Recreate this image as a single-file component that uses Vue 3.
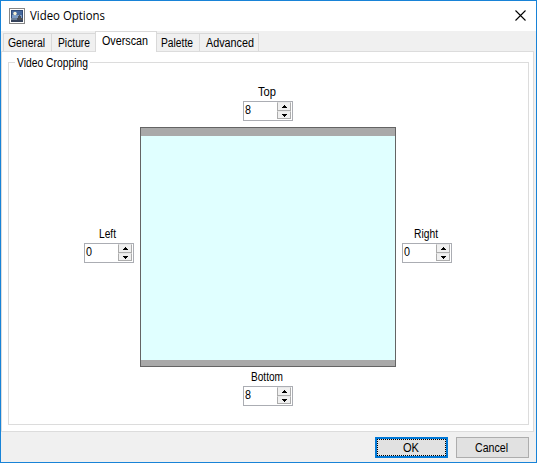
<script setup>
import { h } from 'vue'

const tabs = [
  { name: 'General', width: 37 },
  { name: 'Picture', width: 32 },
  { name: 'Overscan', width: 46, active: true },
  { name: 'Palette', width: 32 },
  { name: 'Advanced', width: 48 },
]
const sides = [
  { name: 'Top', value: 8, width: 18 },
  { name: 'Left', value: 0, width: 17 },
  { name: 'Right', value: 0, width: 24 },
  { name: 'Bottom', value: 8, width: 32 },
]

// Condensed caption: real text fitted to a given width.
const Caption = (props) =>
  h('svg', { class: 'caption', width: props.w, height: 16 }, [
    h('text', { x: 0, y: 12, textLength: props.w, lengthAdjust: 'spacingAndGlyphs' }, props.text),
  ])
Caption.props = ['w', 'text']
</script>

<template>
  <div class="window">
    <header class="titlebar">
      <svg class="app-icon" width="16" height="16" viewBox="0 0 16 16">
        <rect x=".5" y=".5" width="15" height="15" fill="#fff" stroke="#868686" />
        <rect x="2" y="2" width="12" height="12" fill="#2f4a78" />
        <rect x="3" y="3" width="10" height="4" fill="#46689c" />
        <rect x="3" y="7" width="10" height="3" fill="#7d9cc4" />
        <rect x="2" y="10" width="12" height="2" fill="#6a7f9a" />
        <rect x="2" y="12" width="12" height="2" fill="#34425a" />
        <path d="M8 12V10h1V8h1V7h1v1h1v2h2v2z" fill="#4a4f58" />
        <circle cx="6" cy="5.5" r="1.7" fill="#f6f1d6" />
      </svg>
      <Caption class="title" :w="75" text="Video Options" />
      <svg class="close" width="11" height="11" viewBox="0 0 11 11">
        <path d="M.5 .5l10 10M10.5 .5l-10 10" stroke="#000" stroke-width="1.1" />
      </svg>
    </header>

    <nav class="tabs">
      <div v-for="t in tabs" :key="t.name" class="tab" :class="[t.name.toLowerCase(), { active: t.active }]">
        <Caption :w="t.width" :text="t.name" />
      </div>
    </nav>

    <main class="page">
      <section class="group">
        <div class="legend"><Caption :w="71" text="Video Cropping" /></div>
        <div class="cropping">
          <div v-for="s in sides" :key="s.name" class="side" :class="s.name.toLowerCase()">
            <Caption class="name" :w="s.width" :text="s.name" />
            <div class="spin">
              <Caption class="value" :w="6" :text="s.value" />
              <div class="arrows">
                <div class="arrow"><svg width="5" height="3"><path d="M2 0h1v1h1v1h1v1H0V2h1V1h1z" /></svg></div>
                <div class="arrow"><svg width="5" height="3"><path d="M0 0h5v1H4v1H3v1H2V2H1V1H0z" /></svg></div>
              </div>
            </div>
          </div>
          <div class="preview"></div>
        </div>
      </section>
    </main>

    <footer class="actions">
      <button class="btn default"><span class="focus"><Caption :w="16" text="OK" /></span></button>
      <button class="btn cancel"><Caption :w="33" text="Cancel" /></button>
    </footer>
  </div>
</template>

<style>
body { margin: 0; }
</style>

<style scoped>
.window {
  box-sizing: border-box;
  width: 537px;
  height: 463px;
  border: 1px solid #1883d7;
  background: #f0f0f0;
  display: flex;
  flex-direction: column;
  font-family: "Liberation Sans", Arial, sans-serif;
  font-size: 12px;
  color: #000;
}
.window :deep(svg) { display: block; flex: none; overflow: visible; }
.titlebar {
  height: 30px;
  background: #fff;
  display: flex;
  box-sizing: border-box;
  padding: 7px 10px 0 8px;
}
.title {
  font-family: "Open Sans", sans-serif;
  margin: 0 0 0 5px;
}
.close { margin: 2px 0 0 auto; }
.tabs {
  height: 20px;
  display: flex;
  align-items: flex-end;
  padding-left: 2px;
}
.tab {
  box-sizing: border-box;
  height: 18px;
  border: 1px solid #d9d9d9;
  border-bottom: 0;
  border-right: 0;
  padding: 1px 0 0 4px;
}
.tab.general { width: 48px; }
.tab.picture { width: 44px; padding-left: 6px; }
.tab.overscan { width: 62px; padding-left: 6px; }
.tab.palette { width: 42px; padding-left: 4px; border-left: 0; }
.tab.advanced { width: 60px; padding-left: 6px; border-right: 1px solid #d9d9d9; }
.tab.active {
  height: 21px;
  margin-bottom: -1px;
  background: #fff;
  border-right: 1px solid #d9d9d9;
  position: relative;
}
.page {
  box-sizing: border-box;
  width: 533px;
  height: 381px;
  background: #fff;
  border: 1px solid #dcdcdc;
  padding: 10px 4px 6px 6px;
}
.group {
  box-sizing: border-box;
  height: 363px;
  border: 1px solid #dcdcdc;
}
.legend {
  width: 72px;
  height: 16px;
  margin: -8px 0 0 6px;
  padding: 0 1px 0 2px;
  background: #fff;
}
.cropping {
  display: grid;
  grid-template-columns: 50px 256px 50px;
  grid-template-rows: 37px 240px 39px;
  column-gap: 6px;
  row-gap: 6px;
  margin: 13px 0 0 75px;
}
.side {
  display: flex;
  flex-direction: column;
  align-items: center;
  gap: 1px;
}
.name { margin-right: 2px; }
.top { grid-area: 1 / 2; }
.left { grid-area: 2 / 1; padding-top: 99px; }
.left .name { margin-right: 4px; }
.right { grid-area: 2 / 3; padding-top: 99px; }
.bottom { grid-area: 3 / 2; margin-top: -4px; }
.preview {
  grid-area: 2 / 2;
  box-sizing: border-box;
  border: 1px solid #646464;
  background: linear-gradient(#a9a9a9 8px, #e0ffff 8px, #e0ffff 232px, #a9a9a9 232px);
}
.spin {
  box-sizing: border-box;
  width: 50px;
  height: 20px;
  border: 1px solid #abadb3;
  background: #fff;
  display: flex;
  justify-content: space-between;
  padding: 0 1px 1px 1px;
}
.arrows { width: 14px; display: flex; flex-direction: column; }
.arrow {
  box-sizing: border-box;
  height: 8px;
  background: #f0f0f0;
  border: 1px solid #acacac;
  border-top-color: #e8e8e8;
  display: flex;
  align-items: center;
  justify-content: center;
}
.arrow:first-child { height: 9px; }
.actions {
  display: flex;
  justify-content: flex-end;
  gap: 8px;
  padding: 5px 7px 0 0;
}
.btn {
  box-sizing: border-box;
  width: 73px;
  height: 21px;
  margin: 0;
  padding: 0;
  border: 1px solid #adadad;
  background: #e1e1e1;
  font: inherit;
  color: inherit;
  display: flex;
  align-items: center;
  justify-content: center;
}
.btn.default { border: 2px solid #0078d7; }
.btn.cancel { padding-right: 3px; }
.focus {
  box-sizing: border-box;
  width: 100%;
  height: 100%;
  border: 1px dotted #000;
  padding-right: 2px;
  display: flex;
  align-items: center;
  justify-content: center;
}
</style>
